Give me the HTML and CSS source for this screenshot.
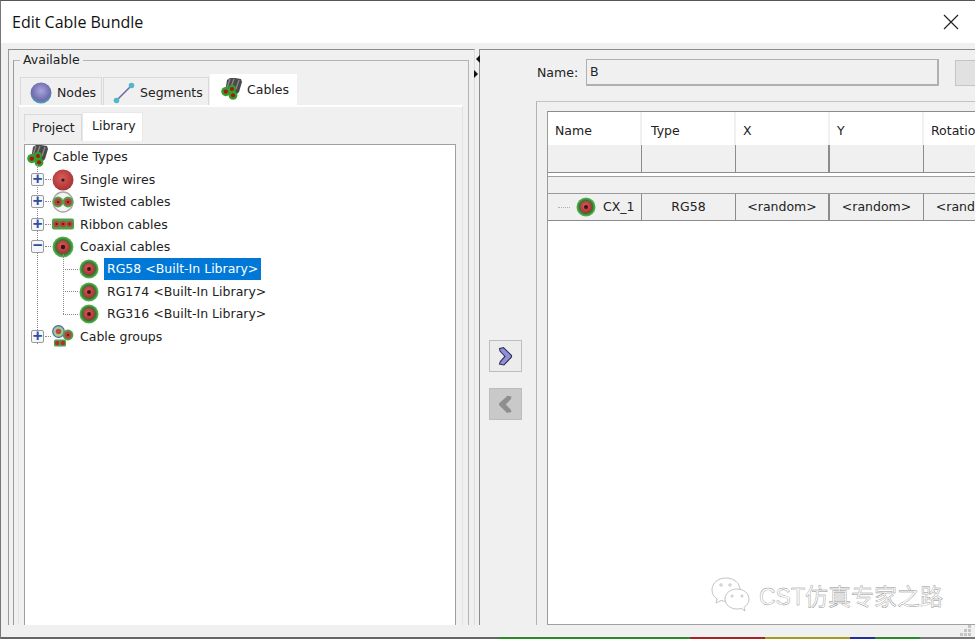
FILE: index.html
```html
<!DOCTYPE html>
<html lang="en">
<head>
    <meta charset="UTF-8">
    <title>Edit Cable Bundle</title>
    <link rel="stylesheet" href="styles.css">
</head>
<body>
    <svg class="defs" width="0" height="0">
        <defs>
            <radialGradient id="redDisk" cx="45%" cy="40%" r="60%">
                <stop offset="0" stop-color="#d95c5c"/>
                <stop offset="1" stop-color="#a83232"/>
            </radialGradient>
            <radialGradient id="greenRing" cx="50%" cy="50%" r="50%">
                <stop offset="0.7" stop-color="#2f7a30"/>
                <stop offset="1" stop-color="#62bd58"/>
            </radialGradient>
            <radialGradient id="sphere" cx="50%" cy="40%" r="60%">
                <stop offset="0" stop-color="#a9a6dc"/>
                <stop offset="0.75" stop-color="#6f6cae"/>
                <stop offset="1" stop-color="#45a7b0"/>
            </radialGradient>
            <symbol id="i-coax" viewBox="0 0 22 22">
                <circle cx="11" cy="11" r="10.5" fill="url(#greenRing)"/>
                <circle cx="11" cy="11" r="6.6" fill="url(#redDisk)"/>
                <circle cx="11" cy="11" r="2.2" fill="#3a1414"/>
            </symbol>
            <symbol id="i-wire" viewBox="0 0 22 22">
                <circle cx="11" cy="11" r="10.5" fill="url(#redDisk)"/>
                <circle cx="11" cy="11" r="1.6" fill="#3a1414"/>
            </symbol>
            <symbol id="i-twisted" viewBox="0 0 22 22">
                <circle cx="11" cy="11" r="10" fill="#f4f4f4" stroke="#a8a8a8" stroke-width="1.4"/>
                <circle cx="6" cy="11" r="5.4" fill="#4aa844"/>
                <circle cx="16" cy="11" r="5.4" fill="#4aa844"/>
                <circle cx="6" cy="11" r="3.6" fill="#c03c3c"/>
                <circle cx="16" cy="11" r="3.6" fill="#c03c3c"/>
                <circle cx="6" cy="11" r="1" fill="#3a1414"/>
                <circle cx="16" cy="11" r="1" fill="#3a1414"/>
            </symbol>
            <symbol id="i-ribbon" viewBox="0 0 22 22">
                <rect x="0" y="5.5" width="22" height="11" rx="2" fill="#4f9f48"/>
                <circle cx="4.5" cy="11" r="3.1" fill="#c03c3c"/>
                <circle cx="11" cy="11" r="3.1" fill="#c03c3c"/>
                <circle cx="17.5" cy="11" r="3.1" fill="#c03c3c"/>
                <circle cx="4.5" cy="11" r="0.9" fill="#3a1414"/>
                <circle cx="11" cy="11" r="0.9" fill="#3a1414"/>
                <circle cx="17.5" cy="11" r="0.9" fill="#3a1414"/>
            </symbol>
            <symbol id="i-group" viewBox="0 0 22 22">
                <circle cx="6.5" cy="6.5" r="5.8" fill="#9ad08e" stroke="#4a62b0" stroke-width="1.2"/>
                <circle cx="6.5" cy="6.5" r="2.8" fill="#c84444"/>
                <circle cx="16" cy="10" r="5.4" fill="#4f9f48"/>
                <circle cx="16" cy="10" r="3.4" fill="#c03c3c"/>
                <circle cx="16" cy="10" r="0.9" fill="#3a1414"/>
                <rect x="2" y="14.5" width="12" height="7" rx="1.5" fill="#4f9f48"/>
                <circle cx="5.2" cy="18" r="2.2" fill="#b82c2c"/>
                <circle cx="10.8" cy="18" r="2.2" fill="#b82c2c"/>
            </symbol>
            <symbol id="i-cables" viewBox="0 0 22 22">
                <path d="M6 2l3-2 5 0 6 1 1 3-3 10-5 5-9-5z" fill="#4a4a4a"/>
                <path d="M9 1l-3 9M13 1l-3 8M18 2l-3 9" stroke="#8c8c8c" stroke-width="1.3" fill="none"/>
                <circle cx="4.8" cy="13.6" r="4.6" fill="#33a02c"/>
                <circle cx="11" cy="11" r="4" fill="#33a02c"/>
                <circle cx="12" cy="17.4" r="4.4" fill="#33a02c"/>
                <circle cx="4.8" cy="13.6" r="2.2" fill="#a81616"/>
                <circle cx="11" cy="11" r="2" fill="#a81616"/>
                <circle cx="12" cy="17.4" r="2.1" fill="#a81616"/>
            </symbol>
            <symbol id="i-node" viewBox="0 0 22 22">
                <circle cx="11" cy="11" r="10.5" fill="url(#sphere)"/>
            </symbol>
            <symbol id="i-segment" viewBox="0 0 22 22">
                <path d="M3.5 18.500L18.500 3.500" stroke="#6c68b0" stroke-width="1.6"/>
                <circle cx="3.5" cy="18.500" r="2.800" fill="#52b8c4"/>
                <circle cx="18.500" cy="3.500" r="2.800" fill="#52b8c4"/>
            </symbol>
        </defs>
    </svg>

    <div class="window">
        <div class="titlebar">
            <span class="title">Edit Cable Bundle</span>
            <svg class="close" width="16" height="16" viewBox="0 0 16 16">
                <path d="M1 1l14 14M15 1L1 15" stroke="#222" stroke-width="1.2"/>
            </svg>
        </div>

        <div class="main">
            <div class="left-panel">
                <div class="group">
                    <span class="group-label">Available</span>
                    <div class="tabs">
                        <div class="tab tab-nodes"><svg class="tab-icon"><use href="#i-node"/></svg>Nodes</div>
                        <div class="tab tab-segments"><svg class="tab-icon"><use href="#i-segment"/></svg>Segments</div>
                        <div class="tab tab-cables active"><svg class="tab-icon"><use href="#i-cables"/></svg>Cables</div>
                    </div>
                    <div class="pane">
                        <div class="subtabs">
                            <div class="subtab">Project</div>
                            <div class="subtab active">Library</div>
                        </div>
                        <div class="tree">
                            <div class="row row-root"><svg class="node-icon"><use href="#i-cables"/></svg><span class="root-text">Cable Types</span></div>
                            <div class="branches">
                                <div class="row"><span class="expander">+</span><svg class="node-icon"><use href="#i-wire"/></svg><span class="node-text">Single wires</span></div>
                                <div class="row"><span class="expander">+</span><svg class="node-icon"><use href="#i-twisted"/></svg><span class="node-text">Twisted cables</span></div>
                                <div class="row"><span class="expander">+</span><svg class="node-icon"><use href="#i-ribbon"/></svg><span class="node-text">Ribbon cables</span></div>
                                <div class="row"><span class="expander">&minus;</span><svg class="node-icon"><use href="#i-coax"/></svg><span class="node-text">Coaxial cables</span></div>
                                <div class="children">
                                    <div class="row row-child"><svg class="child-icon"><use href="#i-coax"/></svg><span class="child-text selected">RG58 &lt;Built-In Library&gt;</span></div>
                                    <div class="row row-child"><svg class="child-icon"><use href="#i-coax"/></svg><span class="child-text">RG174 &lt;Built-In Library&gt;</span></div>
                                    <div class="row row-child"><svg class="child-icon"><use href="#i-coax"/></svg><span class="child-text">RG316 &lt;Built-In Library&gt;</span></div>
                                </div>
                                <div class="row"><span class="expander">+</span><svg class="node-icon"><use href="#i-group"/></svg><span class="node-text">Cable groups</span></div>
                            </div>
                        </div>
                    </div>
                </div>
            </div>

            <div class="splitter">
                <span class="arrow-left"></span>
                <span class="arrow-right"></span>
            </div>

            <div class="right-panel">
                <div class="move-col">
                    <div class="move-btn">
                        <svg width="15" height="19" viewBox="0 0 15 19"><path d="M1.500 1.500l4-.8 8 7.800v1.500l-7.500 8-4.500-1 .8-2.500 4.700-5-5-5.500z" fill="#8f8fdc" stroke="#33334f" stroke-width="1.100"/></svg>
                    </div>
                    <div class="move-btn disabled">
                        <svg width="15" height="19" viewBox="0 0 15 19"><path d="M13.500 1.500l-4-.8-8.500 7.800v1.500l8 8 4.500-1-.8-2.500-5-5 5.300-5.500z" fill="#8e8e8e"/></svg>
                    </div>
                </div>

                <div class="detail">
                    <div class="name-row">
                        <label class="name-label">Name:</label>
                        <div class="name-input">B</div>
                        <div class="name-btn"></div>
                    </div>
                    <div class="bundle-group">
                        <div class="grid">
                            <div class="grid-head">
                                <div class="cell">Name</div>
                                <div class="cell cell-type">Type</div>
                                <div class="cell">X</div>
                                <div class="cell">Y</div>
                                <div class="cell">Rotation</div>
                            </div>
                            <div class="grid-filter">
                                <div class="cell"></div>
                                <div class="cell"></div>
                                <div class="cell cell-thick"></div>
                                <div class="cell"></div>
                                <div class="cell"></div>
                            </div>
                            <div class="grid-spacer"></div>
                            <div class="grid-row">
                                <div class="cell cell-name">
                                    <span class="stub"></span>
                                    <svg class="child-icon"><use href="#i-coax"/></svg>
                                    <span>CX_1</span>
                                </div>
                                <div class="cell">RG58</div>
                                <div class="cell">&lt;random&gt;</div>
                                <div class="cell">&lt;random&gt;</div>
                                <div class="cell">&lt;random&gt;</div>
                            </div>
                        </div>
                    </div>
                </div>
            </div>
        </div>

        <div class="footer">
            <svg class="grip" width="12" height="12" viewBox="0 0 12 12">
                <path d="M8 0h3v3H8zM4 4h3v3H4zM8 4h3v3H8zM0 8h3v3H0zM4 8h3v3H4zM8 8h3v3H8z" fill="#c4c4c4"/>
            </svg>
        </div>
        <div class="edge">
            <span class="edge-gray"></span>
            <span class="edge-green"></span>
            <span class="edge-red"></span>
            <span class="edge-olive"></span>
            <span class="edge-blue"></span>
            <span class="edge-green2"></span>
            <span class="edge-rest"></span>
        </div>

        <div class="watermark">
            <svg width="40" height="36" viewBox="0 0 40 36" fill="#fff" stroke="#b4b4b4" stroke-width="0.8">
                <path d="M15 1C7 1 1 6 1 13c0 4 2 7 5 9l-1 4 5-2.500c2 .6 3 .8 5 .8 8 0 14-5.500 14-11.300C29 6 23 1 15 1z"/>
                <path d="M26 12c-6.500 0-12 4.300-12 10s5.500 10 12 10c1.500 0 2.800-.2 4-.6l4 2.600-1-3.600c3-2 5-5 5-8.400 0-5.700-5.500-10-12-10z"/>
                <circle cx="10" cy="8" r="1.200"/>
                <circle cx="19" cy="8" r="1.200"/>
                <circle cx="21" cy="19" r="1"/>
                <circle cx="31" cy="19" r="1"/>
            </svg>
            <span class="watermark-text">CST仿真专家之路</span>
        </div>
    </div>
</body>
</html>
```

FILE: styles.css
```css
* {
    margin: 0;
    padding: 0;
    box-sizing: border-box;
}

body {
    width: 975px;
    height: 639px;
    overflow: hidden;
    background-color: #f0f0f0;
    font-family: "DejaVu Sans", sans-serif;
    font-size: 12.5px;
    color: #222;
}

.defs {
    position: absolute;
}

.window {
    position: relative;
    width: 975px;
    height: 639px;
    display: flex;
    flex-direction: column;
    border-top: 1px solid #555;
    border-left: 1px solid #777;
}

.titlebar {
    height: 42px;
    flex: none;
    display: flex;
    justify-content: space-between;
    align-items: center;
    padding: 0 16px 0 11px;
    background-color: white;
}

.title {
    font-family: "Open Sans", sans-serif;
    font-size: 16px;
    color: #111;
}

.main {
    flex: 1;
    min-height: 0;
    display: flex;
    padding: 6px 0 0 7px;
}

/* left side */
.left-panel {
    width: 467px;
    flex: none;
    display: flex;
    padding: 10px 5px 0 4px;
    border-top: 1px solid #8c8c8c;
    border-left: 1px solid #9a9a9a;
    border-right: 1px solid #dcdcdc;
}

.group {
    position: relative;
    flex: 1;
    display: flex;
    flex-direction: column;
    padding: 14px 5px 0 4px;
    border-top: 1px solid #b4b4b4;
    border-left: 1px solid #9a9a9a;
    border-right: 1px solid #b4b4b4;
}

.group-label {
    position: absolute;
    left: 6px;
    top: -9px;
    padding: 0 3px;
    background-color: #f0f0f0;
}

.tabs {
    height: 30px;
    flex: none;
    display: flex;
    align-items: flex-end;
    padding-left: 2px;
}

.tab {
    height: 28px;
    display: flex;
    align-items: center;
    padding-top: 2px;
    background-color: #f0f0f0;
    border: 1px solid #d9d9d9;
    border-bottom: none;
    margin-right: 1px;
}

.tab.active {
    height: 31px;
    background-color: white;
    border-color: white;
    margin-right: 0;
}

.tab-nodes {
    width: 82px;
    padding-left: 9px;
}

.tab-segments {
    width: 106px;
    padding-left: 9px;
}

.tab-cables {
    width: 87px;
    padding-left: 10px;
    padding-bottom: 4px;
}

.tab-icon {
    width: 22px;
    height: 22px;
    margin-right: 5px;
    flex: none;
}

.tab-cables .tab-icon {
    margin-right: 4px;
}

.pane {
    flex: 1;
    min-height: 0;
    display: flex;
    flex-direction: column;
    padding: 5px 6px 0 5px;
    border-top: 2px solid white;
    border-left: 1px solid #e2e2e2;
    border-right: 1px solid #e2e2e2;
}

.subtabs {
    height: 29px;
    flex: none;
    display: flex;
    align-items: flex-end;
}

.subtab {
    width: 58px;
    height: 27px;
    padding: 5px 0 0 7px;
    background-color: #f0f0f0;
    border: 1px solid #d9d9d9;
    border-bottom: none;
}

.subtab.active {
    width: 61px;
    height: 29px;
    padding: 5px 0 0 9px;
    background-color: white;
    border-color: #e8e8e8;
}

.tree {
    flex: 1;
    margin-top: 3px;
    background-color: white;
    border-top: 1px solid #a0a0a0;
    border-left: 1px solid #a0a0a0;
    border-right: 1px solid #a0a0a0;
}

.row {
    height: 22.4px;
    display: flex;
    align-items: center;
    padding-left: 6px;
}

.row-root {
    padding-left: 2px;
}

.root-text {
    margin-left: 4px;
}

.branches {
    position: relative;
    margin-top: 1px;
}

.branches::before {
    content: "";
    position: absolute;
    left: 12px;
    top: -4px;
    height: 180px;
    border-left: 1px dotted #8a8a8a;
}

.expander {
    position: relative;
    width: 13px;
    height: 13px;
    flex: none;
    display: flex;
    align-items: center;
    justify-content: center;
    font-family: "Liberation Mono", monospace;
    font-size: 17px;
    font-weight: bold;
    line-height: 1;
    color: #2d4f9c;
    background-color: #f4f6fb;
    border: 1px solid #9a9a9a;
    border-radius: 2px;
}

.expander::after {
    content: "";
    position: absolute;
    left: 13px;
    top: 5px;
    width: 6px;
    border-top: 1px dotted #8a8a8a;
}

.node-icon {
    width: 22px;
    height: 22px;
    flex: none;
    margin-left: 8px;
    position: relative;
}

.row-root .node-icon {
    margin-left: 0;
}

.node-text {
    margin-left: 6px;
}

.children {
    position: relative;
}

.children::before {
    content: "";
    position: absolute;
    left: 38px;
    top: -4px;
    height: 60px;
    border-left: 1px dotted #8a8a8a;
}

.row-child {
    position: relative;
    padding-left: 54px;
}

.row-child::before {
    content: "";
    position: absolute;
    left: 38px;
    top: 11px;
    width: 15px;
    border-top: 1px dotted #8a8a8a;
}

.child-icon {
    width: 20px;
    height: 20px;
    flex: none;
}

.child-text {
    margin-left: 5px;
    padding: 0 3px;
    line-height: 22px;
}

.child-text.selected {
    background-color: #0078d7;
    color: white;
}

/* splitter */
.splitter {
    position: relative;
    width: 4px;
    flex: none;
}

.arrow-left {
    position: absolute;
    left: 1px;
    top: 6px;
    border-top: 4px solid transparent;
    border-bottom: 4px solid transparent;
    border-right: 4px solid #111;
}

.arrow-right {
    position: absolute;
    left: -1px;
    top: 21px;
    border-top: 4px solid transparent;
    border-bottom: 4px solid transparent;
    border-left: 4px solid #111;
}

/* right side */
.right-panel {
    flex: 1;
    min-width: 0;
    display: flex;
    overflow: hidden;
    border-top: 1px solid #8c8c8c;
    border-left: 1px solid #8c8c8c;
}

.move-col {
    width: 56px;
    flex: none;
    display: flex;
    flex-direction: column;
    gap: 16px;
    padding: 290px 0 0 9px;
}

.move-btn {
    width: 33px;
    height: 32px;
    display: flex;
    align-items: center;
    justify-content: center;
    background-color: #ececec;
    border: 1px solid #bdbdbd;
}

.move-btn.disabled {
    background-color: #c9c9c9;
}

.detail {
    flex: 1;
    min-width: 0;
    display: flex;
    flex-direction: column;
}

.name-row {
    display: flex;
    align-items: center;
    padding-top: 9px;
}

.name-label {
    width: 50px;
    flex: none;
    padding-left: 1px;
}

.name-input {
    width: 353px;
    height: 27px;
    flex: none;
    padding-left: 3px;
    line-height: 23px;
    border: 1px solid #b0b0b0;
    border-bottom-width: 2px;
    border-right-width: 2px;
}

.name-btn {
    width: 40px;
    height: 26px;
    flex: none;
    margin-left: 16px;
    background-color: #e1e1e1;
    border: 1px solid #c4c4c4;
}

.bundle-group {
    flex: 1;
    display: flex;
    margin-top: 15px;
    padding: 9px 0 0 10px;
    border-top: 1px solid #c4c4c4;
    border-left: 1px solid #b4b4b4;
}

.grid {
    flex: 1;
    min-width: 0;
    background-color: white;
    border-top: 1px solid #8c8c8c;
    border-left: 1px solid #9a9a9a;
    border-bottom: 1px solid #a0a0a0;
}

.grid-head,
.grid-filter,
.grid-row {
    display: flex;
}

.cell {
    width: 94px;
    flex: none;
    white-space: nowrap;
}

.grid-head {
    height: 33px;
}

.grid-head .cell {
    padding: 11px 0 0 7px;
    border-right: 2px solid #f0f0f0;
}

.grid-head .cell-type {
    padding-left: 9px;
}

.grid-filter {
    height: 28px;
    background-color: #f0f0f0;
    border-bottom: 1px solid #8c8c8c;
}

.grid-filter .cell {
    border-right: 1px solid #8c8c8c;
}

.grid-filter .cell-thick {
    border-right-width: 2px;
}

.grid-spacer {
    height: 17px;
    background-color: #f0f0f0;
    border-top: 1px solid #a0a0a0;
    margin-top: 3px;
}

.grid-row {
    height: 28px;
    background-color: #f0f0f0;
    border-top: 1px solid #9a9a9a;
    border-bottom: 1px solid #8c8c8c;
}

.grid-row .cell {
    line-height: 26px;
    text-align: center;
    border-right: 1px solid #8c8c8c;
}

.grid-row .cell:nth-child(3) {
    border-right-width: 2px;
}

.grid-row .cell-name {
    display: flex;
    align-items: center;
    padding-left: 10px;
}

.stub {
    width: 12px;
    margin-right: 6px;
    border-top: 1px dotted #b0b0b0;
}

.cell-name span:last-child {
    margin-left: 7px;
}

/* bottom */
.footer {
    height: 12px;
    flex: none;
    display: flex;
    justify-content: flex-end;
    padding-right: 3px;
}

.edge {
    height: 2px;
    flex: none;
    display: flex;
}

.edge-gray {
    width: 497px;
    background-color: #666;
}

.edge-green {
    width: 192px;
    background-color: #2a8a2a;
}

.edge-red {
    width: 75px;
    background-color: #a82424;
}

.edge-olive {
    width: 85px;
    background-color: #a89a20;
}

.edge-blue {
    width: 25px;
    background-color: #20309a;
}

.edge-green2 {
    width: 45px;
    background-color: #2a8a2a;
}

.edge-rest {
    flex: 1;
    background-color: #777;
}

/* watermark sits over the table */
.watermark {
    position: absolute;
    left: 710px;
    top: 576px;
    display: flex;
    align-items: center;
    gap: 8px;
}

.watermark-text {
    font-family: "Liberation Sans", "Noto Sans CJK SC", sans-serif;
    font-size: 23px;
    white-space: nowrap;
    color: white;
    -webkit-text-stroke: 0.4px #8e8e8e;
}
```
